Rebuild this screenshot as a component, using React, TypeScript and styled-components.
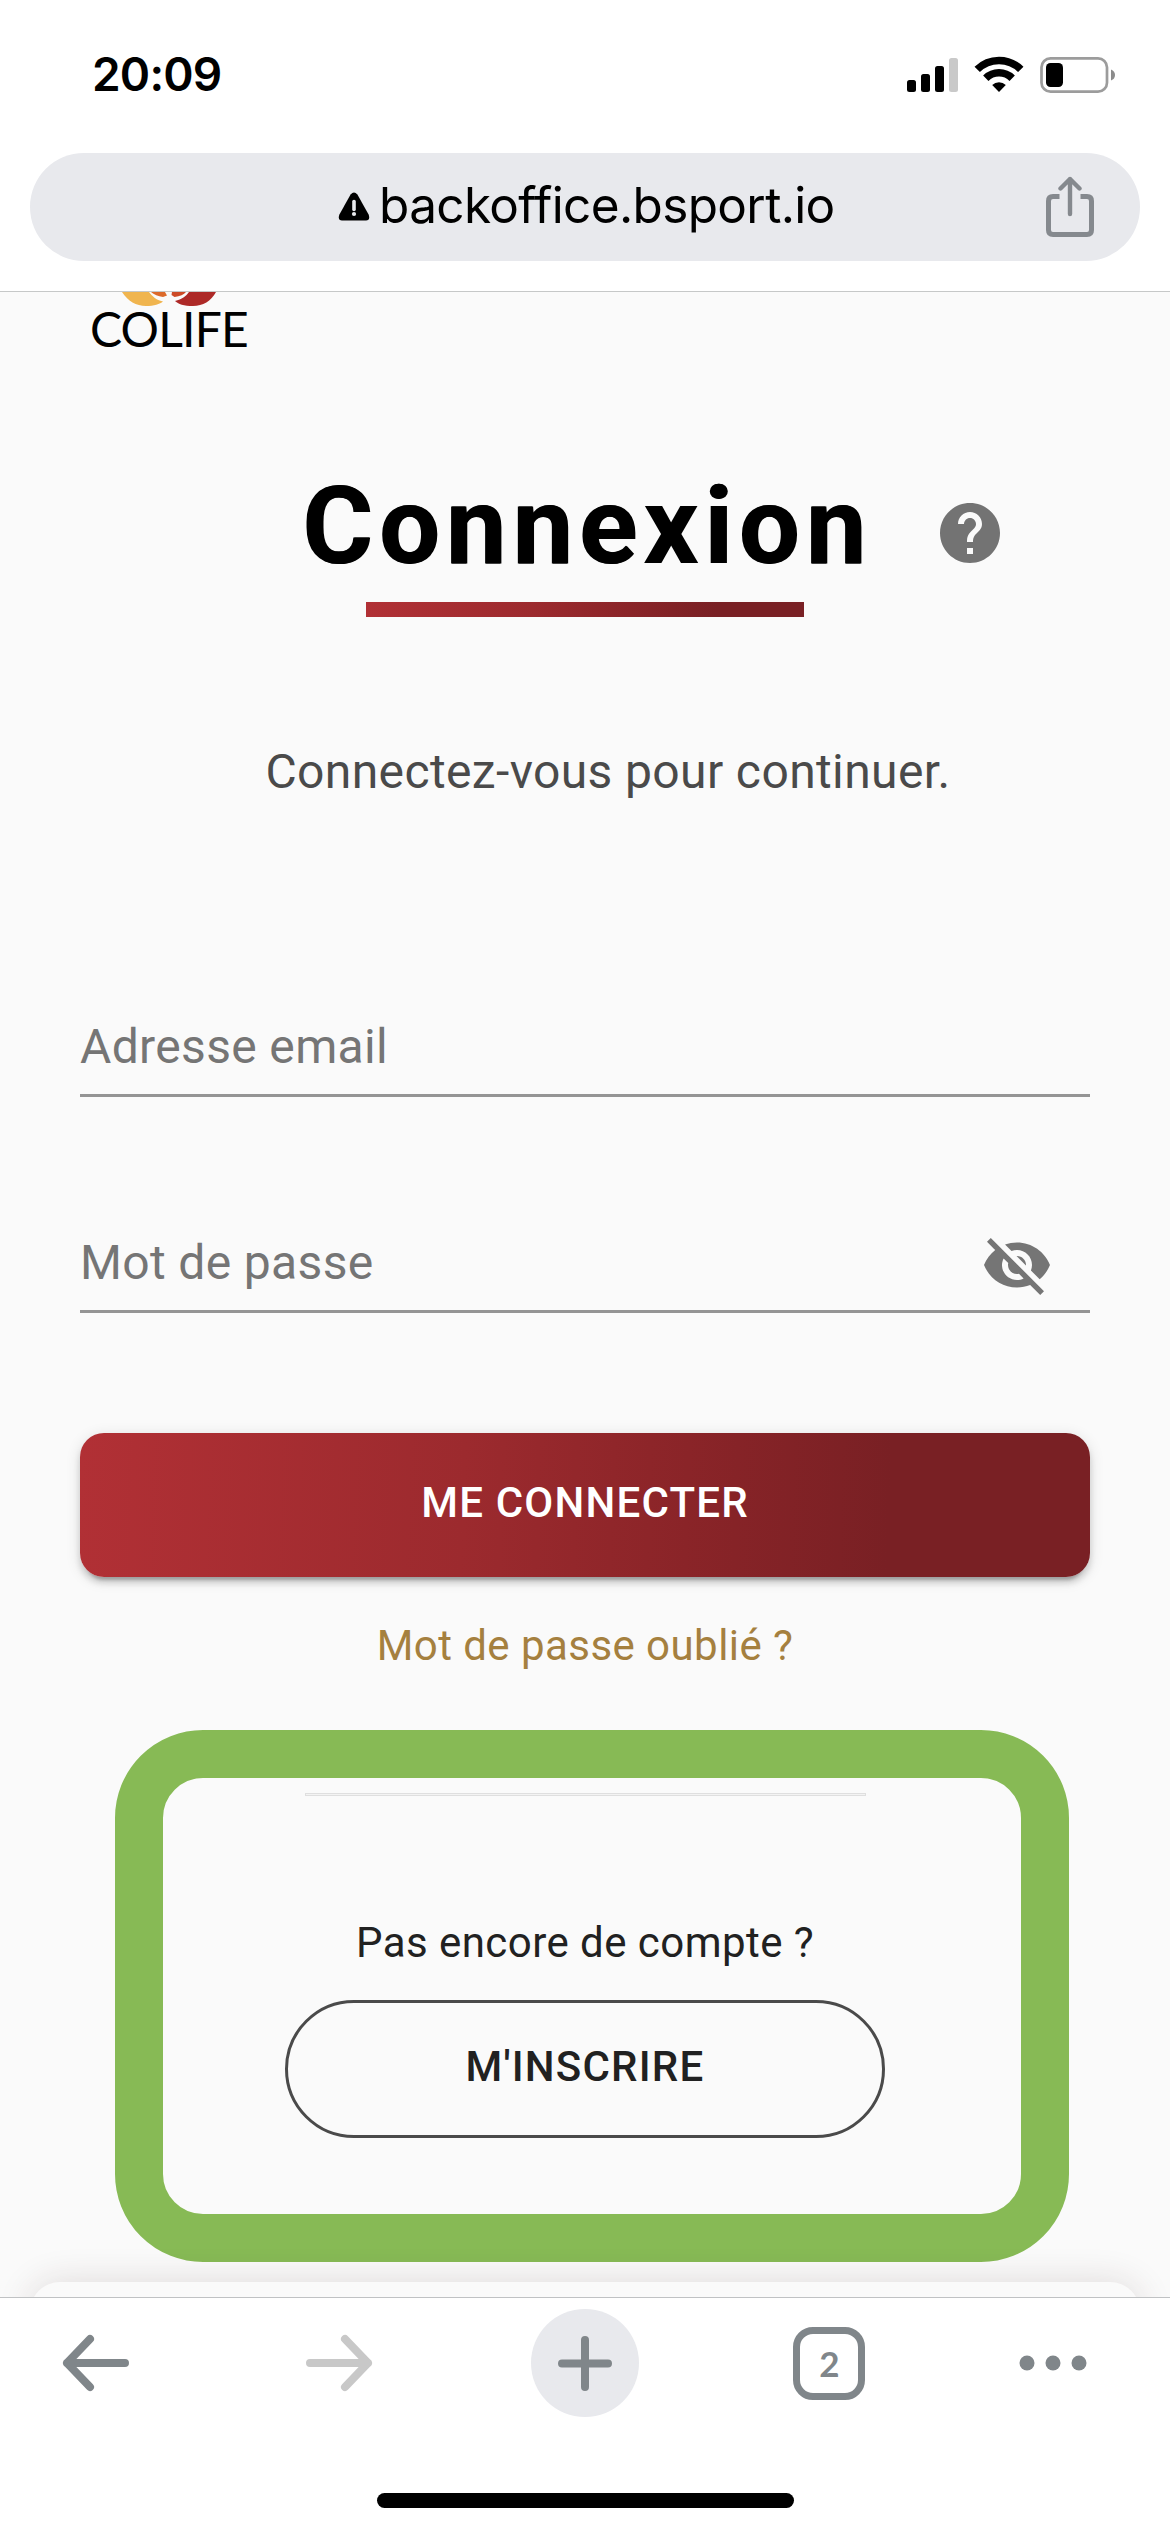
import React from "react";
import styled, { createGlobalStyle } from "styled-components";

const GlobalStyle = createGlobalStyle`
  * { box-sizing: border-box; }
  body { margin: 0; background: #fff; }
`;

const roboto = `Roboto, "Liberation Sans", sans-serif`;
const inter = `Inter, "Liberation Sans", sans-serif`;
const redGradient = "linear-gradient(92deg, #b13035 0%, #9c2a2e 38%, #8a2428 60%, #792024 80%)";

const Screen = styled.div`
  width: 1170px;
  height: 2532px;
  display: flex;
  flex-direction: column;
  overflow: hidden;
  background: #fff;
  font-family: ${roboto};
`;

const BrowserHeader = styled.header`
  height: 292px;
  flex: none;
  border-bottom: 1px solid #c6c8c8;
`;

const StatusBar = styled.div`
  height: 153px;
  padding: 0 55px 4px 92px;
  display: flex;
  align-items: center;
  justify-content: space-between;
`;

const Clock = styled.span`
  padding-bottom: 2px;
  font: 600 46px/56px ${inter};
  letter-spacing: -0.8px;
  color: #000;
`;

const AddressBar = styled.div`
  height: 108px;
  margin: 0 30px;
  padding: 0 46px 0 308px;
  border-radius: 54px;
  background: #e8e9ed;
  display: flex;
  align-items: center;
`;

const Address = styled.span`
  margin-left: 9px;
  padding-bottom: 4px;
  flex: 1;
  font: 400 49.5px/60px ${inter};
  letter-spacing: -0.65px;
  color: #000;
`;

const Content = styled.main`
  height: 2005px;
  flex: none;
  overflow: hidden;
  background: #fafafa;
  display: flex;
  flex-direction: column;

  & > * { flex: none; }
`;

const Brand = styled.div`
  height: 171px;
  padding-left: 90px;
`;

const BrandMark = styled.svg`
  display: block;
  margin-left: 30px;
`;

const BrandName = styled.div`
  margin-top: -4px;
  font: 400 48px/52px Lato, sans-serif;
  letter-spacing: -0.8px;
  color: #000;
`;

const TitleRow = styled.div`
  height: 126px;
  display: grid;
  grid-template-columns: 1fr auto 1fr;
  align-items: center;
`;

const Title = styled.h1`
  grid-column: 2;
  margin: 0;
  padding-left: 4px;
  font: 700 108px/126px ${roboto};
  letter-spacing: 6px;
  color: #000;
  text-shadow: 1px 0 #000;
`;

const HelpButton = styled.button`
  margin: 14px 0 0 62px;
  padding: 0;
  width: 72px;
  height: 72px;
  border: 0;
  background: none;
`;

const TitleBar = styled.div`
  width: 438px;
  height: 15px;
  margin: 13px auto 0;
  background: ${redGradient};
`;

const Intro = styled.p`
  margin: 127px 0 0;
  padding-left: 46px;
  text-align: center;
  font: 400 48px/56px ${roboto};
  letter-spacing: 0.38px;
  color: #4a4a4a;
`;

const Form = styled.form`
  margin: 219px 80px 0;
  display: flex;
  flex-direction: column;
`;

const Field = styled.label<{ $gap?: number }>`
  height: 78px;
  margin-bottom: ${(p) => p.$gap ?? 0}px;
  padding-right: 37px;
  border-bottom: 3px solid #949494;
  display: flex;
  align-items: flex-start;
  justify-content: space-between;
  font: 400 48px/56px ${roboto};
  letter-spacing: 0.35px;
  color: #757575;
`;

const FieldIcon = styled.svg`
  margin-top: -6px;
`;

const SubmitButton = styled.button`
  height: 144px;
  padding: 0 0 5px;
  border: 0;
  border-radius: 24px;
  background: ${redGradient};
  box-shadow: 0 9px 3px -6px rgba(0, 0, 0, 0.2), 0 6px 6px 0 rgba(0, 0, 0, 0.14), 0 3px 15px 0 rgba(0, 0, 0, 0.12);
  font: 500 42px/50px ${roboto};
  letter-spacing: 1.2px;
  color: #fff;
`;

const ForgotLink = styled.a`
  margin-top: 44px;
  text-align: center;
  font: 400 42px/50px ${roboto};
  letter-spacing: 0.45px;
  color: #a5803f;
`;

const SignupFrame = styled.section`
  width: 954px;
  height: 532px;
  margin: 59px 0 0 115px;
  border: 48px solid #87ba55;
  border-radius: 88px;
  padding: 15px 16px 0 2px;
  display: flex;
  flex-direction: column;
  align-items: center;
`;

const Divider = styled.hr`
  width: 561px;
  height: 3px;
  margin: 0 0 122px;
  border: 1px solid #dfdfdf;
  background: #f3f3f3;
`;

const SignupText = styled.p`
  margin: 0 0 32px;
  font: 400 42px/50px ${roboto};
  letter-spacing: 0.45px;
  color: #212121;
`;

const SignupButton = styled.button`
  width: 600px;
  height: 138px;
  padding: 0 0 5px;
  border: 3px solid #4a4a4a;
  border-radius: 69px;
  background: transparent;
  font: 500 42px/50px ${roboto};
  letter-spacing: 1.2px;
  color: #212121;
`;

const BottomSheet = styled.div`
  height: 60px;
  margin: 20px 30px 0;
  border-radius: 40px;
  background: #fafafa;
  box-shadow: 0 0 36px rgba(60, 30, 30, 0.14);
`;

const Toolbar = styled.nav`
  flex: 1;
  border-top: 1px solid #c0c2c4;
  display: flex;
  flex-direction: column;
  align-items: center;
`;

const ToolbarRow = styled.div`
  width: 100%;
  height: 108px;
  margin-top: 11px;
  display: grid;
  grid-template-columns: 190px 300px 190px 298px 149px;
  align-items: center;
  justify-items: center;
`;

const NewTab = styled.button`
  width: 108px;
  height: 108px;
  padding: 0;
  border: 0;
  border-radius: 50%;
  background: #e8e9ed;
  display: grid;
  place-items: center;
`;

const TabCount = styled.button`
  width: 72px;
  height: 73px;
  padding: 0 0 0 1px;
  border: 7px solid #80868a;
  border-radius: 20px;
  background: none;
  display: grid;
  place-items: center;
  font: 700 35px/40px Lato, sans-serif;
  color: #80868a;
`;

const HomeIndicator = styled.div`
  width: 417px;
  height: 15px;
  margin-top: 76px;
  border-radius: 8px;
  background: #000;
`;

const Signals = () => (
  <svg width="209" height="40" viewBox="906 54 209 40">
    <rect x="907" y="79" width="9" height="12" rx="2.5" />
    <rect x="921" y="73" width="9" height="18" rx="2.5" />
    <rect x="935" y="65" width="9" height="26" rx="2.5" />
    <rect x="949" y="57" width="9" height="34" rx="2.5" fill="#c9c9c9" />
    <g fill="none" stroke="#000" strokeWidth="7.6">
      <path d="M977.2 68.4 A31 31 0 0 1 1020.8 68.4" />
      <path d="M985.8 77.2 A18.8 18.8 0 0 1 1012.2 77.2" />
    </g>
    <path d="M999 91 L992.2 84 A10 10 0 0 1 1005.8 84 Z" />
    <rect x="1041.5" y="57.3" width="65.5" height="33.4" rx="9" fill="#fff" stroke="#9c9c9c" strokeWidth="2.7" />
    <rect x="1046" y="62" width="17" height="24" rx="4.5" />
    <path d="M1111 68.5 Q1115 70 1115 74 Q1115 78 1111 79.5 Z" fill="#8c8c8c" />
  </svg>
);

const WarningIcon = () => (
  <svg width="32" height="30" viewBox="0 0 32 30">
    <path d="M12.6 2.4 Q16 -1.6 19.4 2.4 L30.6 22.6 Q32.6 28 28 28.6 H4 Q-.6 28 1.4 22.6 Z" fill="#000" />
    <path d="M16 9.6 V17.5" stroke="#e8e9ed" strokeWidth="3.6" strokeLinecap="round" />
    <circle cx="16" cy="22" r="2.1" fill="#e8e9ed" />
  </svg>
);

const ShareIcon = () => (
  <svg width="48" height="62" viewBox="0 0 48 62" fill="none" stroke="#85898e" strokeWidth="5">
    <path d="M13.5 20.5 H7 Q2.5 20.5 2.5 25 V54 Q2.5 58.5 7 58.5 H41 Q45.5 58.5 45.5 54 V25 Q45.5 20.5 41 20.5 H34.5" />
    <path d="M24 38 V3 M14.5 12.5 L24 3 L33.5 12.5" strokeWidth="4.4" strokeLinecap="round" strokeLinejoin="round" />
  </svg>
);

const ArrowIcon = ({ color, forward }: { color: string; forward?: boolean }) => (
  <svg width="70" height="58" viewBox="0 2 70 58" fill="none" stroke={color} strokeWidth="8" strokeLinecap="round" strokeLinejoin="round">
    <path d={forward ? "M5 31 H63 M40 7 L63 31 L40 55" : "M65 31 H7 M30 7 L7 31 L30 55"} />
  </svg>
);

export default function App() {
  return (
    <>
      <GlobalStyle />
      <Screen>
        <BrowserHeader>
          <StatusBar>
            <Clock>20:09</Clock>
            <Signals />
          </StatusBar>
          <AddressBar>
            <WarningIcon />
            <Address>backoffice.bsport.io</Address>
            <ShareIcon />
          </AddressBar>
        </BrowserHeader>

        <Content>
          <Brand>
            <BrandMark width="98" height="15" viewBox="0 0 98 15">
              <path d="M2 0 C8 9 16 14 26 14 C34 14 40 12 43 9.5 C36 8 32 4 29 0 Z" fill="#f0b54f" />
              <path d="M31 0 H45 L47 3.5 L43 5 C38 4.500 34 2.5 31 0 Z" fill="#dc6a2b" />
              <path d="M96 0 C91 9 83 14 73 14 C64 14 58 12 55 9 C62 7.5 66 4 69 0 Z" fill="#ad2927" />
              <path d="M52 0 H66 C64 2.5 60 4.5 54.5 5 L51.5 3 Z" fill="#cc4a27" />
            </BrandMark>
            <BrandName>COLIFE</BrandName>
          </Brand>

          <TitleRow>
            <Title>Connexion</Title>
            <HelpButton aria-label="Aide">
              <svg width="72" height="72" viewBox="0 0 24 24" fill="#737373">
                <path d="M12 2C6.480 2 2 6.480 2 12s4.480 10 10 10 10-4.480 10-10S17.520 2 12 2zm1 17h-2v-2h2v2zm2.070-7.750l-.9.920C13.450 12.900 13 13.500 13 15h-2v-.5c0-1.100.45-2.100 1.170-2.830l1.240-1.260c.37-.36.59-.86.59-1.410 0-1.100-.9-2-2-2s-2 .9-2 2H8c0-2.210 1.790-4 4-4s4 1.790 4 4c0 .88-.36 1.680-.93 2.250z" />
              </svg>
            </HelpButton>
          </TitleRow>
          <TitleBar />
          <Intro>Connectez-vous pour continuer.</Intro>

          <Form>
            <Field $gap={138}>Adresse email</Field>
            <Field $gap={120}>
              Mot de passe
              <FieldIcon width="72" height="72" viewBox="0 0 24 24" fill="#757575">
                <path d="M12 7c2.760 0 5 2.240 5 5 0 .65-.13 1.260-.36 1.830l2.920 2.920c1.510-1.260 2.700-2.890 3.430-4.750-1.730-4.390-6-7.500-11-7.500-1.400 0-2.740.25-3.980.7l2.160 2.160C10.740 7.130 11.350 7 12 7zM2 4.270l2.280 2.280.46.46C3.080 8.300 1.780 10.020 1 12c1.730 4.390 6 7.500 11 7.500 1.550 0 3.030-.3 4.380-.84l.42.42L19.730 22 21 20.730 3.270 3 2 4.270zM7.530 9.800l1.550 1.550c-.05.21-.08.43-.08.65 0 1.660 1.340 3 3 3 .22 0 .44-.03.65-.08l1.550 1.550c-.67.33-1.410.53-2.200.53-2.760 0-5-2.240-5-5 0-.79.2-1.530.53-2.200zm4.310-.78l3.150 3.150.02-.16c0-1.660-1.340-3-3-3l-.17.01z" />
              </FieldIcon>
            </Field>
            <SubmitButton type="button">ME CONNECTER</SubmitButton>
            <ForgotLink>Mot de passe oublié ?</ForgotLink>
          </Form>

          <SignupFrame>
            <Divider />
            <SignupText>Pas encore de compte ?</SignupText>
            <SignupButton>M'INSCRIRE</SignupButton>
          </SignupFrame>
          <BottomSheet />
        </Content>

        <Toolbar>
          <ToolbarRow>
            <ArrowIcon color="#80868a" />
            <ArrowIcon color="#c8c8c8" forward />
            <NewTab aria-label="Nouvel onglet">
              <svg width="54" height="55" viewBox="0 0 54 55" stroke="#80868a" strokeWidth="8" strokeLinecap="round">
                <path d="M4 27.5 H50 M27 4 V51" />
              </svg>
            </NewTab>
            <TabCount>2</TabCount>
            <svg width="70" height="16" viewBox="0 0 70 16" fill="#80868a">
              <circle cx="9" cy="8" r="7.5" />
              <circle cx="35" cy="8" r="7.5" />
              <circle cx="61" cy="8" r="7.5" />
            </svg>
          </ToolbarRow>
          <HomeIndicator />
        </Toolbar>
      </Screen>
    </>
  );
}
